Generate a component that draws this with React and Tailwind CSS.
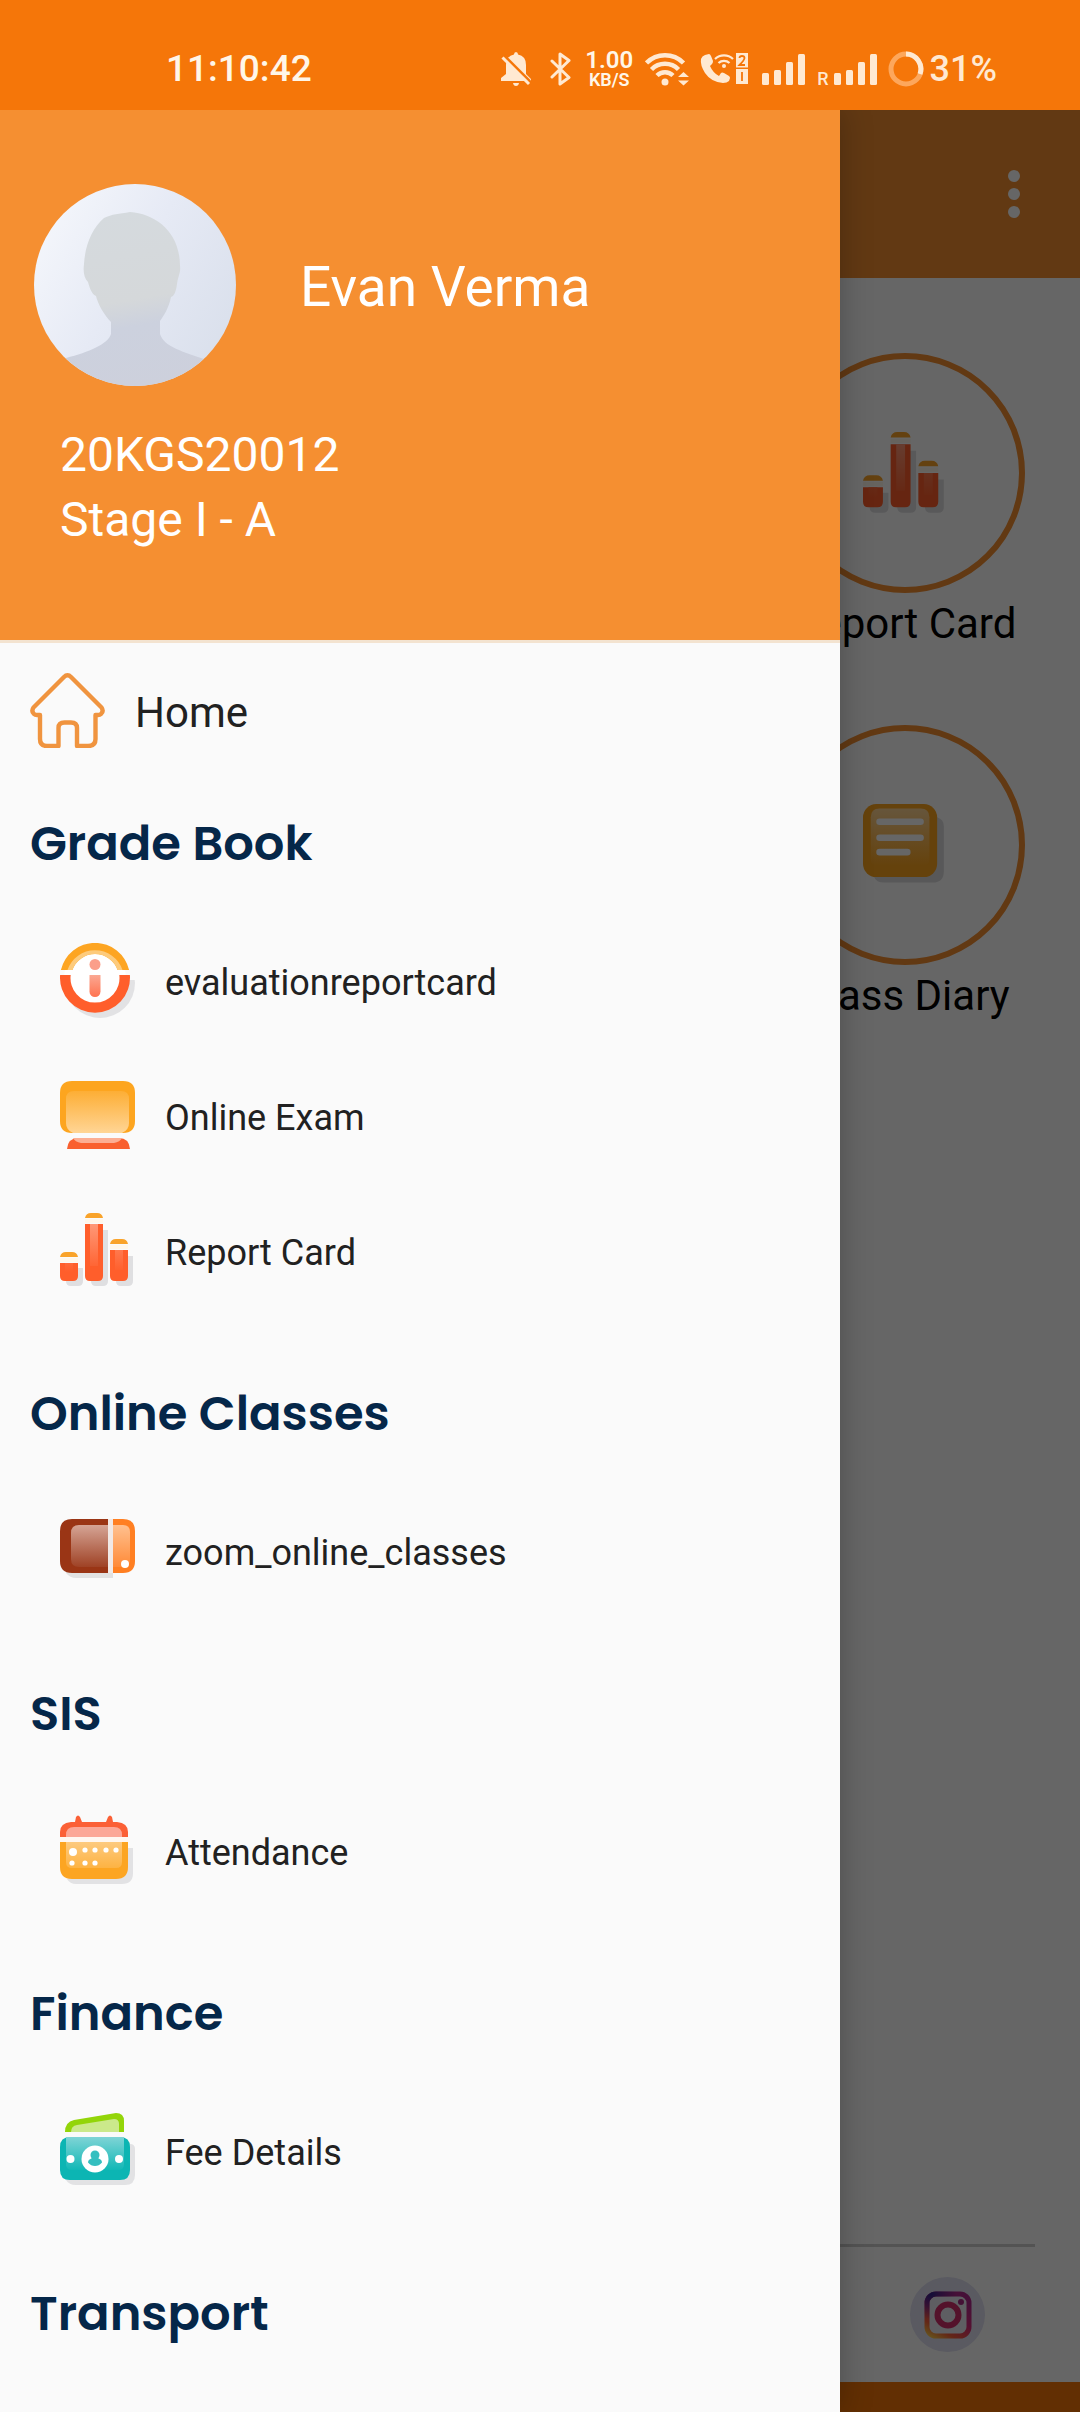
import { useId } from "react"

const menuSections = [
  {
    title: "Grade Book",
    items: [
      { label: "evaluationreportcard", Icon: InfoIcon },
      { label: "Online Exam", Icon: ExamIcon },
      { label: "Report Card", Icon: ChartIcon },
    ],
  },
  { title: "Online Classes", items: [{ label: "zoom_online_classes", Icon: TabletIcon }] },
  { title: "SIS", items: [{ label: "Attendance", Icon: CalendarIcon }] },
  { title: "Finance", items: [{ label: "Fee Details", Icon: MoneyIcon }] },
  { title: "Transport", items: [] },
]

/* -------------------
 * MENU ICONS
 * ------------------- */
function HomeIcon({ className }) {
  return (
    <svg viewBox="0 0 75 75" className={className} fill="none" stroke="#f0943f" strokeWidth="4.400" strokeLinejoin="round" aria-hidden="true">
      <path d="M34 4Q37.500 .5 41 4L71.500 34.500Q74 38 71 41Q70 42 68 42H65.500V66Q65.500 73 58 73H47V55Q47 49.500 41 49.500H34.500Q28.500 49.500 28.500 55V73H17Q10 73 10 66V42H7Q5 42 4 41Q1 38 3.500 34.500Z" />
    </svg>
  )
}

function InfoIcon({ className }) {
  const id = useId()
  return (
    <svg viewBox="0 0 75 75" className={className} aria-hidden="true">
      <defs>
        <linearGradient id={id} x1="0" y1="0" x2="0" y2="1">
          <stop offset="0" stopColor="#fba893" />
          <stop offset="1" stopColor="#ff7350" />
        </linearGradient>
      </defs>
      <circle cx="40" cy="40" r="35" fill="#e2e2e4" />
      <path d="M0 0H75V37H0Z" fill="#fafafa" />
      <circle cx="35" cy="35" r="31" fill="#fff" />
      <path d="M.9 27A35 35 0 0 1 69.100 27H57.600A24 24 0 0 0 12.400 27Z" fill="#fda522" />
      <path d="M7.500 27A29 29 0 0 1 62.500 27H57.600A24 24 0 0 0 12.400 27Z" fill="#fdcb7c" />
      <path d="M.1 32H10.700A24.500 24.500 0 1 0 59.300 32H69.900A35 35 0 1 1 .1 32Z" fill="#ff5e2b" />
      <circle cx="35" cy="21.500" r="5.500" fill="#fb9f8a" />
      <path d="M29.500 32H40.500V48.500a5.500 5.500 0 0 1-11 0Z" fill={`url(#${id})`} />
    </svg>
  )
}

function ExamIcon({ className }) {
  const id = useId()
  return (
    <svg viewBox="0 0 75 75" className={className} aria-hidden="true">
      <defs>
        <linearGradient id={id} x1="0" y1="0" x2="0" y2="1">
          <stop offset="0" stopColor="#fdae35" />
          <stop offset="1" stopColor="#ffd595" />
        </linearGradient>
      </defs>
      <path d="M12 3H63Q75 3 75 15V43Q75 55 63 55H12Q0 55 0 43V15Q0 3 12 3Z" fill="#fda51f" />
      <path d="M14 13H61Q69 13 69 21V45Q69 52 62 55H13Q6 52 6 45V21Q6 13 14 13Z" fill={`url(#${id})`} />
      <path d="M7 71Q8 60 18 60H59Q69 60 70 71Z" fill="#f9602f" />
      <path d="M13 60H62Q60 64 54 65H21Q15 64 13 60Z" fill="#fcae93" />
    </svg>
  )
}

function ChartIcon({ className }) {
  const id = useId()
  return (
    <svg viewBox="0 0 75 75" className={className} aria-hidden="true">
      <defs>
        <linearGradient id={id} x1="0" y1="0" x2="0" y2="1">
          <stop offset="0" stopColor="#ff9877" />
          <stop offset="1" stopColor="#ff5e2b" />
        </linearGradient>
      </defs>
      <path d="M8 55H23V68Q23 73 18 73H11Q6 73 6 68ZM32 17H48V68Q48 73 43 73H36Q31 73 31 68ZM57 43H73V68Q73 73 68 73H61Q56 73 56 68Z" fill="#dfdfe1" />
      <path d="M0 44Q1 39 6 39H12Q17 39 18 44ZM25 5Q26 0 31 0H37Q42 0 43 5ZM50 31Q51 26 56 26H62Q67 26 68 31Z" fill="#f9a32a" />
      <path d="M0 45H18V49H0ZM25 6H43V10H25ZM50 32H68V36H50Z" fill="#fff7ea" />
      <path d="M0 50H18V63Q18 68 13 68H5Q0 68 0 63ZM25 11H43V63Q43 68 38 68H30Q25 68 25 63ZM50 37H68V63Q68 68 63 68H55Q50 68 50 63Z" fill="#ff5e2b" />
      <path d="M30 11H38V53H30ZM55 37H63V57H55ZM5 50H13V59H5Z" fill={`url(#${id})`} />
    </svg>
  )
}

function TabletIcon({ className }) {
  const id = useId()
  return (
    <svg viewBox="0 0 75 75" className={className} aria-hidden="true">
      <defs>
        <linearGradient id={`${id}a`} x1="0" y1="0" x2="0" y2="1">
          <stop offset="0" stopColor="#d5a495" />
          <stop offset="1" stopColor="#9f4225" />
        </linearGradient>
        <linearGradient id={`${id}b`} x1="0" y1="0" x2="0" y2="1">
          <stop offset="0" stopColor="#ffc08f" />
          <stop offset="1" stopColor="#ff8a37" />
        </linearGradient>
      </defs>
      <path d="M6 58H53V65H16Q10 65 6 60Z" fill="#e2e2e2" />
      <path d="M48 6H53V60H48Z" fill="#f1e9e6" />
      <path d="M12 6H48V60H12Q0 60 0 48V18Q0 6 12 6Z" fill="#9a3515" />
      <path d="M19 12H48V54H19Q11 54 11 46V20Q11 12 19 12Z" fill={`url(#${id}a)`} />
      <path d="M53 6H63Q75 6 75 18V48Q75 60 63 60H53Z" fill="#ff7f22" />
      <path d="M53 12H63Q70 12 70 19V47Q70 54 63 54H53Z" fill={`url(#${id}b)`} />
      <circle cx="65" cy="51" r="4" fill="#fff" />
    </svg>
  )
}

function CalendarIcon({ className }) {
  const id = useId()
  return (
    <svg viewBox="0 0 75 75" className={className} aria-hidden="true">
      <defs>
        <linearGradient id={id} x1="0" y1="0" x2="0" y2="1">
          <stop offset="0" stopColor="#fdca7f" />
          <stop offset="1" stopColor="#fdb343" />
        </linearGradient>
      </defs>
      <path d="M68 35H73V60Q73 71 62 71H16Q10 71 7 66Z" fill="#e2e2e4" />
      <path d="M15 9L16 4Q18 1 20 4L22 9H46L48 4Q50 1 52 4L53 9H57Q68 10 68 19V24H0V19Q0 10 11 9Z" fill="#fb6036" />
      <path d="M14 14H54Q62 14 62 22V24H6V22Q6 14 14 14Z" fill="#fca796" />
      <path d="M0 24H68V29H0Z" fill="#fff7f0" />
      <path d="M0 29H68V54Q68 66 56 66H12Q0 66 0 54Z" fill="#fca522" />
      <path d="M6 29H62V49Q62 55 56 55H12Q6 55 6 49Z" fill={`url(#${id})`} />
      <g fill="#fff">
        <circle cx="13" cy="39" r="4" />
        <circle cx="25" cy="37" r="2.600" />
        <circle cx="35" cy="37" r="2.600" />
        <circle cx="46" cy="37" r="2.600" />
        <circle cx="56" cy="37" r="2.600" />
        <circle cx="12" cy="50" r="2.600" />
        <circle cx="25" cy="50" r="2.600" />
        <circle cx="35" cy="50" r="2.600" />
      </g>
    </svg>
  )
}

function MoneyIcon({ className }) {
  const id = useId()
  return (
    <svg viewBox="0 0 75 75" className={className} aria-hidden="true">
      <defs>
        <linearGradient id={id} x1="0" y1="0" x2="0" y2="1">
          <stop offset="0" stopColor="#7fd4d6" />
          <stop offset="1" stopColor="#12b8b6" />
        </linearGradient>
      </defs>
      <path d="M70 31Q75 31 75 36V62Q75 72 65 72H16Q9 72 6 67Z" fill="#e2e2e4" />
      <path d="M5 19Q5 9 14 7L56 0Q64 0 64 8V19Z" fill="#93d509" />
      <path d="M11 19Q11 13 17 12L54 6Q59 6 59 11V19Z" fill="#cbe98b" />
      <path d="M10 24H60Q70 24 70 34V57Q70 67 60 67H10Q0 67 0 57V34Q0 24 10 24Z" fill="#0cb5b3" />
      <path d="M6 24H64V51Q64 57 58 57H12Q6 57 6 51Z" fill={`url(#${id})`} />
      <circle cx="35" cy="46" r="13.500" fill="#fff" />
      <circle cx="10.500" cy="46" r="4" fill="#fff" />
      <circle cx="59" cy="46" r="4" fill="#fff" />
      <circle cx="35" cy="42" r="4.500" fill="#35bfc0" />
      <path d="M32 43H38L38.500 45.500Q42 46.500 42 49.500Q39 53 35 53T28 49.500Q28 46.500 31.500 45.500Z" fill="#35bfc0" />
    </svg>
  )
}

function DiaryIcon({ className }) {
  const id = useId()
  return (
    <svg viewBox="0 0 75 75" className={className} aria-hidden="true">
      <defs>
        <linearGradient id={id} x1="0" y1="0" x2="0" y2="1">
          <stop offset="0" stopColor="#ffd696" />
          <stop offset="1" stopColor="#fda51f" />
        </linearGradient>
      </defs>
      <path d="M67 12Q73 14 73 20V61Q73 71 63 71H19Q12 71 10 66Z" fill="#dcdcde" />
      <rect width="67" height="66" rx="12" fill="#fda51f" />
      <path d="M15 4H52Q60 4 60 12V50Q60 56 54 56H13Q7 56 7 50V12Q7 4 15 4Z" fill={`url(#${id})`} />
      <path d="M15 16H52M15 30.500H52M15 43.500H40" stroke="#fff" strokeWidth="6" strokeLinecap="round" />
    </svg>
  )
}

/* -------------------
 * STATUS BAR
 * ------------------- */
function SignalBars() {
  return (
    <svg viewBox="0 0 43 31" className="h-[31px] w-[43px]" fill="currentColor" aria-hidden="true">
      <rect x="0" y="19" width="7" height="12" rx="1.500" />
      <rect x="12" y="16" width="7" height="15" rx="1.500" />
      <rect x="24" y="8" width="7" height="23" rx="1.500" />
      <rect x="36" y="0" width="7" height="31" rx="1.500" />
    </svg>
  )
}

function StatusBar() {
  return (
    <div className="flex h-[110px] items-center justify-between bg-[#f57609] pt-[28px] pr-[83px] pl-[166px] text-[#ffe9d2]">
      <span className="text-[37px] leading-[40px] font-medium text-[#fff6e8]">11:10:42</span>
      <div className="flex items-center">
        <svg viewBox="0 0 30 34" className="mr-[19px] h-[34px] w-[30px]" aria-label="Muted">
          <path d="M13 2.500Q13 0 15 0T17 2.500Q25 4 25 13V22L30 27V29H0V26L5 22V13Q5 4 13 2.500ZM12 31H18Q17.500 34 15 34T12 31Z" fill="currentColor" />
          <path d="M3 3.500L30 30.500" stroke="#f57609" strokeWidth="3" />
          <path d="M1.500 5.500L28 32" stroke="currentColor" strokeWidth="3" />
        </svg>
        <svg viewBox="0 0 21 34" className="mr-[15px] h-[34px] w-[21px]" fill="none" stroke="currentColor" strokeWidth="3" strokeLinejoin="round" strokeLinecap="round" aria-label="Bluetooth">
          <path d="M2 9L19 25.500L10 32V2L19 8.500L2 25" />
        </svg>
        <div className="mr-[13px] flex w-[46px] flex-col items-center text-[#fff6e8]">
          <span className="text-[24px] leading-[22px] font-semibold">1.00</span>
          <span className="text-[18px] leading-[18px] font-semibold">KB/S</span>
        </div>
        <svg viewBox="0 0 44 34" className="mr-[11px] h-[34px] w-[44px]" aria-label="Wi-Fi">
          <g fill="none" stroke="currentColor" strokeWidth="4.500">
            <path d="M1.500 11A26 26 0 0 1 38.500 11" />
            <path d="M6.500 17.500A19 19 0 0 1 33.500 17.500" />
            <path d="M12 23.500A11.500 11.500 0 0 1 28 23.500" />
          </g>
          <circle cx="20" cy="30" r="3.500" fill="currentColor" />
          <path d="M33 25L38.500 20L44 25ZM33 28.500L38.500 33.500L44 28.500Z" fill="currentColor" />
        </svg>
        <svg viewBox="0 0 48 32" className="mr-[14px] h-[32px] w-[48px]" aria-label="Wi-Fi calling">
          <path d="M5 2L9 1Q10 1 11 3L13 8Q13 10 12 11L10 13Q13 20 19 23L21 20Q22 19 24 20L29 23Q30 24 30 25L29 28Q27 30 23 30Q11 29 5 20Q0 12 1 6Q2 3 5 2Z" fill="currentColor" />
          <path d="M15 6A13 13 0 0 1 33 6M18.500 10A8 8 0 0 1 29.500 10" fill="none" stroke="currentColor" strokeWidth="2.200" />
          <circle cx="24" cy="13" r="2" fill="currentColor" />
          <rect x="36" y="0" width="12" height="14.500" fill="currentColor" />
          <rect x="36" y="16" width="12" height="15" fill="currentColor" />
          <path d="M39.500 5Q39.500 3 42 3T44.500 5Q44.500 7 39.500 12H45M42 19V28" fill="none" stroke="#f57609" strokeWidth="1.800" />
        </svg>
        <SignalBars />
        <span className="mr-[5px] ml-[12px] self-end text-[18px] leading-[20px] font-medium">R</span>
        <SignalBars />
        <svg viewBox="0 0 36 36" className="mr-[6px] ml-[11px] size-[36px]" fill="none" strokeWidth="5" aria-label="Battery">
          <circle cx="18" cy="18" r="15" stroke="#fda75c" />
          <path d="M18 3A15 15 0 0 1 32 23" stroke="#ffe9d2" />
        </svg>
        <span className="text-[36px] leading-[40px] font-medium">31%</span>
      </div>
    </div>
  )
}

/* -------------------
 * HOME SCREEN
 * ------------------- */
function HomeTile({ label, Icon }) {
  return (
    <a href="#" className="col-start-3 flex flex-col items-center text-black">
      <span className="flex size-[240px] items-center justify-center rounded-full border-6 border-[#f58f31]">
        <Icon className="mr-[2px] size-[83px]" />
      </span>
      <span className="mt-[6px] text-[42px] leading-[50px]">{label}</span>
    </a>
  )
}

function InstagramIcon({ className }) {
  const id = useId()
  return (
    <svg viewBox="0 0 75 75" className={className} aria-hidden="true">
      <defs>
        <linearGradient id={`${id}a`} x1="0" y1="1" x2=".6" y2="0">
          <stop offset="0" stopColor="#ffd24a" />
          <stop offset=".25" stopColor="#f9603a" />
          <stop offset=".6" stopColor="#d62a7b" />
          <stop offset="1" stopColor="#b02a8c" />
        </linearGradient>
        <radialGradient id={`${id}b`} cx=".1" cy="0" r=".6">
          <stop offset="0" stopColor="#32258c" />
          <stop offset="1" stopColor="#32258c" stopOpacity="0" />
        </radialGradient>
      </defs>
      <circle cx="37.500" cy="37.500" r="37.500" fill="#e0e0f2" />
      <rect x="17" y="17" width="42" height="42" rx="9" fill="#ececf4" stroke={`url(#${id}a)`} strokeWidth="5" />
      <rect x="17" y="17" width="42" height="42" rx="9" fill="none" stroke={`url(#${id}b)`} strokeWidth="5" />
      <circle cx="38" cy="38" r="10.500" fill="none" stroke="#d22f6c" strokeWidth="6" />
      <circle cx="51" cy="25" r="3" fill="#a82a84" />
    </svg>
  )
}

function HomeScreen() {
  return (
    <div className="flex flex-1 flex-col bg-white">
      <header className="flex h-[168px] items-center justify-end bg-[#f58f31] pr-[51px]">
        <button type="button" aria-label="More options" className="px-[9px]">
          <svg viewBox="0 0 12 48" className="h-[48px] w-[12px]" fill="#fff" aria-hidden="true">
            <circle cx="6" cy="6" r="6" />
            <circle cx="6" cy="24" r="6" />
            <circle cx="6" cy="42" r="6" />
          </svg>
        </button>
      </header>
      <main className="grid flex-1 grid-cols-3 content-start gap-y-[76px] pt-[75px] pl-[30px]">
        <HomeTile label="Report Card" Icon={ChartIcon} />
        <HomeTile label="Class Diary" Icon={DiaryIcon} />
      </main>
      <footer className="border-b-[30px] border-[#f57609]">
        <hr className="mx-[45px] border-t-3 border-[#cfcfcf]" />
        <div className="flex justify-end pt-[30px] pr-[95px] pb-[30px]">
          <a href="#" aria-label="Instagram">
            <InstagramIcon className="size-[75px]" />
          </a>
        </div>
      </footer>
    </div>
  )
}

/* -------------------
 * DRAWER
 * ------------------- */
function Avatar() {
  const id = useId()
  return (
    <svg viewBox="0 0 202 202" className="size-[202px] rounded-full" role="img" aria-label="Profile photo">
      <defs>
        <linearGradient id={`${id}a`} x1="0" y1=".1" x2="1" y2=".7">
          <stop offset="0" stopColor="#f6f8fc" />
          <stop offset=".5" stopColor="#e6eaf5" />
          <stop offset="1" stopColor="#dae0ec" />
        </linearGradient>
        <linearGradient id={`${id}b`} x1=".4" y1="0" x2=".6" y2="1">
          <stop offset="0" stopColor="#d5dade" />
          <stop offset=".5" stopColor="#d5d8da" />
          <stop offset=".65" stopColor="#ccd1de" />
          <stop offset="1" stopColor="#cdd0dc" />
        </linearGradient>
      </defs>
      <rect width="202" height="202" fill={`url(#${id}a)`} />
      <path d="M96 28C122 30 146 48 146 82C147 88 144 92 143 100C142 108 140 112 137 113C135 124 129 133 126 137V150C130 163 150 168 170 175L202 202H0L32 174C55 168 74 160 77 150V138C70 131 64 120 62 112C57 110 55 101 54 98C50 94 49 88 50 80C51 62 58 44 70 34C78 30 85 30 96 28Z" fill={`url(#${id}b)`} />
    </svg>
  )
}

function Drawer() {
  return (
    <aside className="absolute inset-y-0 left-0 w-7/9 overflow-hidden bg-[#fafafa] text-[#212121] shadow-[0_0_30px_rgba(0,0,0,0.25)]">
      <div className="h-[533px] border-b-3 border-[#f3e3d0] bg-[#f58f31] pt-[74px] text-white">
        <div className="flex items-center gap-[64px] pl-[34px]">
          <Avatar />
          <h1 className="pt-[4px] text-[55px] leading-[64px]">Evan Verma</h1>
        </div>
        <p className="mt-[36px] pl-[60px] text-[48px] leading-[65px]">
          20KGS20012
          <br />
          Stage I - A
        </p>
      </div>
      <nav>
        <a href="#" className="flex h-[135px] items-center gap-[30px] pl-[30px]">
          <HomeIcon className="size-[75px]" />
          <span className="pt-[4px] text-[42px] leading-[50px]">Home</span>
        </a>
        {menuSections.map(({ title, items }) => (
          <section key={title} className="pb-[30px]">
            <h2 className="flex h-[135px] items-center pb-[3px] pl-[30px] font-['Poppins','Inter',sans-serif] text-[48px] leading-[60px] font-semibold text-[#052749]">
              {title}
            </h2>
            {items.map(({ label, Icon }) => (
              <a key={label} href="#" className="flex h-[135px] items-center gap-[30px] pl-[60px]">
                <Icon className="size-[75px]" />
                <span className="pt-[4px] text-[36px] leading-[44px]">{label}</span>
              </a>
            ))}
          </section>
        ))}
      </nav>
    </aside>
  )
}

export default function App() {
  return (
    <div className="flex min-h-screen flex-col font-['Roboto',sans-serif]">
      <StatusBar />
      <div className="relative flex flex-1 flex-col overflow-hidden">
        <HomeScreen />
        <div className="absolute inset-0 bg-black/60" />
        <Drawer />
      </div>
    </div>
  )
}
